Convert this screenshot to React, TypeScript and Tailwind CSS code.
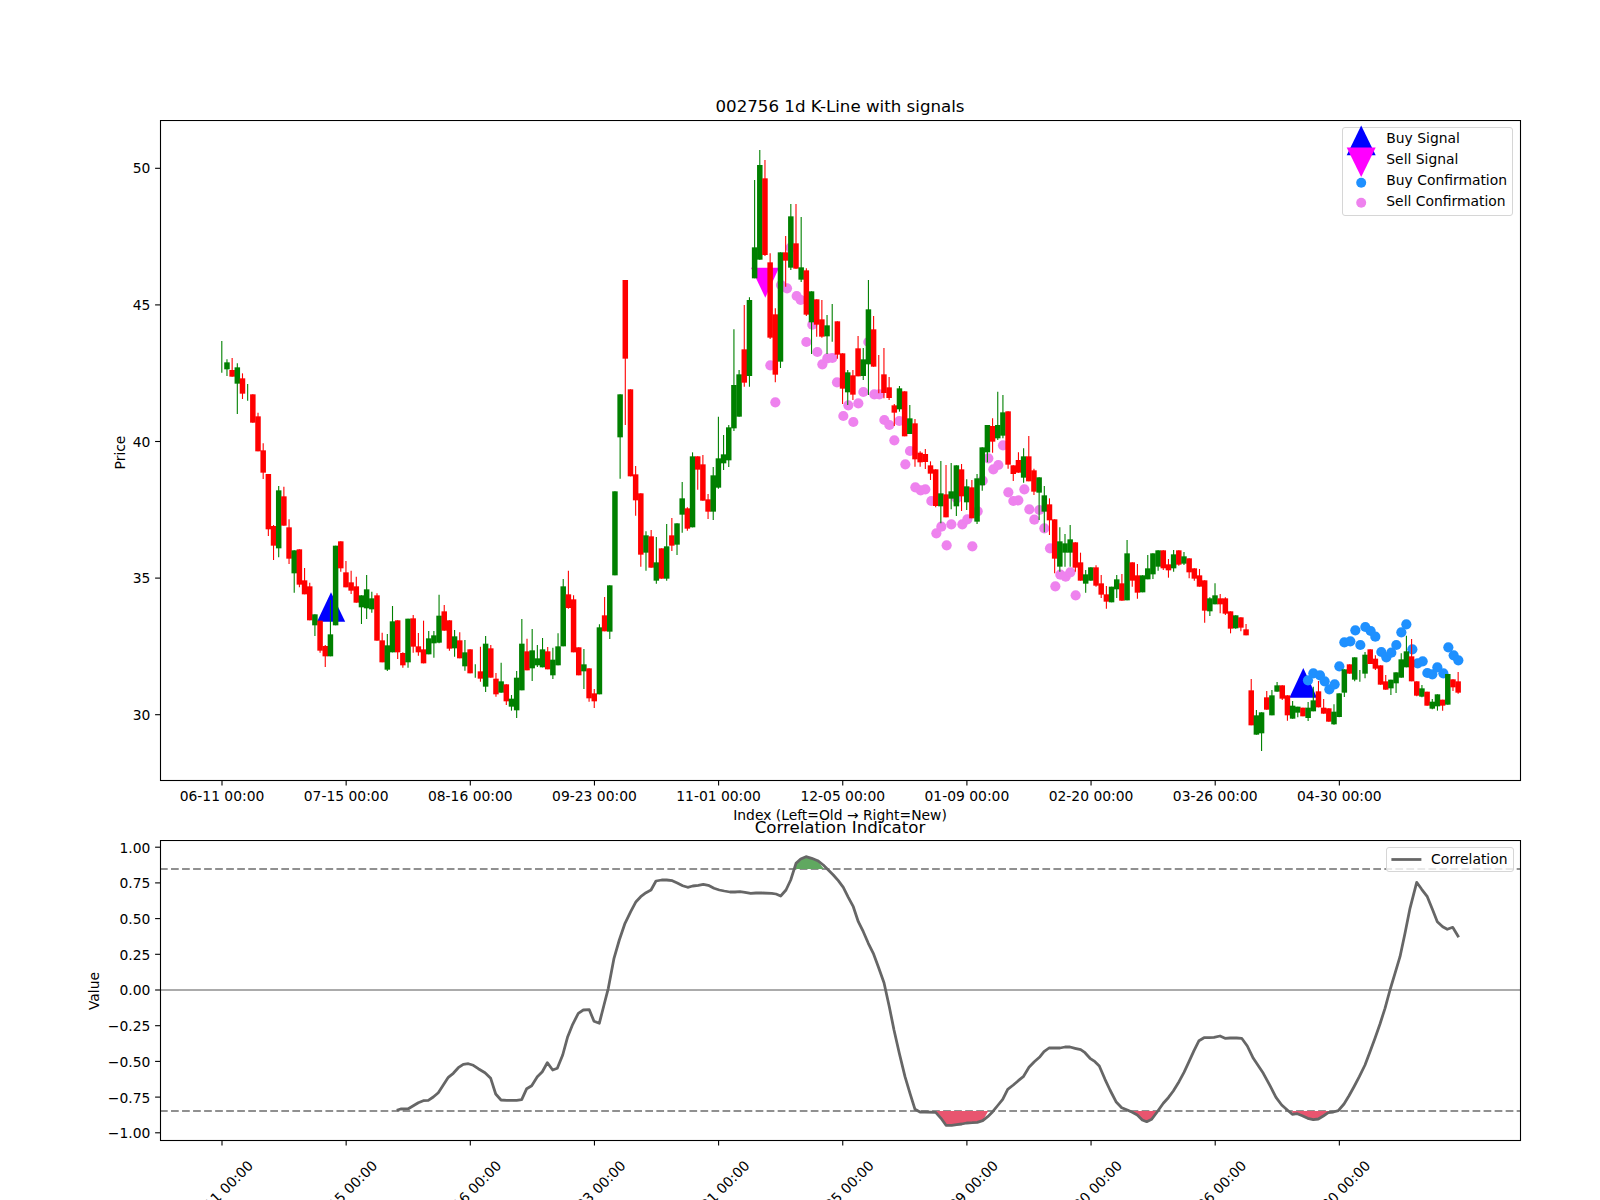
type C = [number, string, number, number, number, number];

// Each table holds candles read with a common vertical origin: [index, colour, wickTop, bodyTop, bodyBottom, wickBottom] in 1/3 px.
const frames: [number, C[]][] = [
  [80, [
    [0,'g',783,0,0,878],[1,'g',838,847,868,888],[2,'r',834,870,890,890],[3,'g',850,862,911,1002],[4,'r',880,895,941,957],
    [5,'g',912,0,0,962],[6,'r',943,943,1028,1028],[7,'r',998,1009,1114,1114],[8,'r',1090,1111,1178,1197],
  ]],
  [480, [
    [9,'r',-18,-18,148,168],[10,'r',135,138,197,240],[11,'g',18,31,205,232],[12,'r',20,49,137,137],[13,'r',118,142,236,252],
    [14,'g',211,211,280,338],[15,'r',208,208,314,322],[16,'r',264,301,343,343],[17,'r',308,319,421,421],[18,'g',403,403,436,468],
    [19,'r',422,422,512,518],[20,'r',495,498,529,561],[21,'g',360,463,529,529],[22,'g',197,197,436,436],[23,'r',184,184,265,275],
    [24,'r',243,277,322,322],[25,'r',272,307,332,342],[26,'r',290,319,368,368],[27,'g',346,346,382,432],[28,'g',285,328,385,417],
    [29,'g',335,355,388,398],[30,'r',340,346,482,482],[31,'r',458,481,547,547],[32,'g',462,496,569,573],[33,'g',378,424,517,517],
    [34,'r',421,421,517,537],[35,'r',517,519,556,563],[36,'g',416,416,547,563],[37,'r',405,415,500,518],[38,'r',459,499,517,527],
    [39,'r',422,508,550,550],[40,'g',453,475,523,523],[41,'g',453,466,490,533],[42,'g',344,407,488,490],[43,'r',375,394,452,452],
    [44,'r',421,421,506,512],[45,'g',450,469,505,530],[46,'r',457,481,535,535],[47,'g',480,517,559,572],[48,'r',508,508,580,580],
    [49,'g',553,0,0,593],[50,'r',500,574,596,605],[51,'g',468,491,620,636],[52,'r',495,505,593,593],[53,'r',579,596,643,650],
    [54,'g',548,604,638,638],[55,'r',613,613,664,675],[56,'g',645,656,680,692],[57,'g',573,593,691,714],[58,'g',417,491,631,631],
    [59,'r',476,514,571,571],[60,'g',447,511,565,603],[61,'g',495,535,556,561],[62,'g',474,508,562,562],[63,'r',501,514,568,568],
    [64,'g',503,539,586,597],[65,'g',460,499,556,556],[66,'g',297,319,499,499],[67,'r',272,343,384,386],[68,'r',346,358,517,517],
    [69,'r',502,502,586,586],[70,'g',507,553,574,627],[71,'r',565,565,655,665],[72,'r',627,640,664,684],[73,'g',433,442,643,643],
    [74,'r',351,406,454,454],[75,'g',316,316,455,477],[76,'g',34,34,286,286],
  ]],
  [130, [
    [77,'g',793,793,922,1046],[78,'r',450,450,686,885],[79,'r',778,778,1039,1039],
    [99,'g',598,765,895,903],[100,'g',720,733,860,860],[101,'r',525,658,758,770],[102,'g',502,510,738,770],[103,'g',150,352,445,445],
    [104,'g',60,105,389,389],[105,'r',90,145,375,378],[106,'r',370,397,623,627],[107,'r',535,553,734,757],[108,'g',367,367,695,714],
    [109,'r',318,367,392,470],[110,'g',222,259,413,420],[111,'r',222,340,416,416],[112,'g',261,412,449,456],[113,'r',415,421,554,558],
    [114,'g',484,484,577,672],[115,'r',508,508,584,620],[116,'r',510,568,620,623],[117,'g',555,586,619,672],[118,'g',522,0,0,635],
    [119,'r',574,574,674,686],[120,'r',670,670,776,822],[121,'g',720,727,787,825],[122,'r',720,736,794,810],[123,'r',618,655,739,739],
    [124,'g',654,688,738,750],[125,'g',450,538,703,795],[126,'r',558,598,710,710],[127,'r',675,0,0,790],[128,'r',654,733,789,805],
    [129,'r',741,772,804,810],[130,'r',822,826,848,888],[131,'g',768,775,838,845],[132,'r',784,784,919,919],[133,'g',825,865,912,912],
    [134,'r',867,880,988,1010],[149,'r',865,888,935,968],[150,'g',785,885,925,930],
  ]],
  [430, [
    [80,'r',108,133,211,257],[81,'r',190,190,374,410],[82,'g',304,316,368,422],[83,'r',300,319,413,413],[84,'g',321,397,452,461],
    [85,'r',355,355,446,446],[86,'g',282,349,446,452],[87,'r',264,316,347,363],[88,'g',280,280,344,375],[89,'g',156,205,254,308],
    [90,'r',232,235,296,302],[91,'g',67,79,292,292],[92,'r',79,79,119,179],[93,'r',75,103,212,212],[94,'r',192,208,245,267],
    [95,'g',111,136,245,270],[96,'g',-40,85,173,176],[97,'g',15,73,100,120],[98,'g',-15,-8,91,111],
    [135,'r',64,68,97,110],[136,'r',57,72,96,117],[137,'r',94,106,131,150],[138,'r',118,118,228,232],[139,'g',93,190,229,280],
    [140,'r',105,193,262,262],[141,'g',99,184,206,238],[142,'g',106,106,229,258],[143,'r',102,118,199,243],[144,'g',148,169,217,240],
    [145,'r',150,172,265,265],[146,'g',132,145,275,282],[147,'g',52,52,166,182],[148,'g',-15,-15,67,97],
  ]],
  [370, [
    [151,'g',75,127,197,205],[152,'r',124,124,284,296],[153,'r',286,286,312,333],[154,'r',247,270,308,308],[155,'g',235,259,323,338],
    [156,'r',198,259,334,334],[157,'r',296,301,365,375],[158,'g',322,322,368,450],[159,'g',348,376,425,487],[160,'r',385,403,451,495],
    [161,'r',448,448,566,610],[162,'g',472,514,590,605],[163,'g',492,520,548,590],[164,'g',465,508,548,590],[165,'r',517,517,593,605],
    [166,'r',548,577,632,632],[167,'g',600,613,641,668],[168,'g',592,592,632,632],[169,'r',586,592,647,650],[170,'r',615,640,674,684],
    [171,'r',648,673,695,716],[172,'g',650,650,697,697],[173,'g',615,628,658,684],[174,'r',612,640,692,692],[175,'g',510,550,691,691],
    [176,'r',577,577,632,650],[177,'r',582,616,668,686],[178,'g',616,616,667,667],[179,'g',555,595,628,628],[180,'g',550,550,613,627],
    [181,'g',541,541,590,602],[182,'r',541,541,595,600],[183,'r',567,583,601,623],[184,'g',540,553,595,605],[185,'r',541,541,584,587],
    [186,'g',546,559,581,585],[187,'r',565,565,607,625],[188,'r',595,595,626,632],[189,'r',597,616,650,650],[190,'r',631,631,722,758],
    [191,'g',682,685,724,738],[192,'g',640,676,703,703],[193,'r',672,685,703,730],[194,'r',682,685,731,735],[195,'r',724,724,776,790],
    [196,'g',736,736,775,776],[197,'r',742,742,773,784],[198,'r',762,778,796,796],[199,'r',927,961,1066,1066],[200,'g',1020,1036,1094,1094],
    [201,'g',1027,1027,1090,1143],[202,'r',963,982,1019,1019],[203,'g',960,976,1036,1036],[204,'g',936,946,965,965],[205,'r',946,946,986,990],
    [206,'r',976,976,1036,1052],[207,'g',993,1007,1046,1046],
  ]],
  [600, [
    [208,'g',320,320,338,352],[209,'r',323,323,349,349],[210,'g',306,323,354,363],[211,'g',260,301,334,334],[212,'r',243,274,322,322],
    [213,'r',297,323,341,341],[214,'r',325,325,365,365],[215,'g',313,335,373,374],[216,'g',280,280,351,352],[217,'g',208,208,278,291],
    [218,'r',193,193,221,221],[219,'g',172,172,239,244],[220,'g',210,0,0,245],[221,'g',156,164,221,235],[222,'r',148,148,192,192],
    [223,'r',166,176,206,210],[224,'r',196,196,254,254],[225,'r',225,244,269,269],[226,'g',239,239,265,285],[227,'g',217,217,250,279],
    [228,'g',160,178,233,233],[229,'g',107,154,202,202],[230,'r',117,169,244,244],[231,'r',244,244,287,289],[232,'g',255,265,290,292],
    [233,'r',275,275,317,317],[234,'g',297,305,326,328],[235,'g',283,283,319,332],[236,'r',299,299,317,332],[237,'g',222,222,314,314],
    [238,'r',238,238,262,273],[239,'r',216,244,278,281],
  ]],
];

const X = (i: number) => 221.8 + 5.173 * i;

const tr = (x0: number, y0: number, pts: number[][]) => pts.map(([x, y]) => [x0 + x / 3, y0 + y / 3]);

// sell-confirmation dots
const pinkDots = [
  ...tr(600, 130, [
    [511,706],[526,817],[543,465],[561,475],[590,498],[572,353],[602,510],[619,636],[637,584],[652,666],[667,703],[682,685],[697,684],
    [711,757],[730,858],[745,826],[760,876],[775,820],[790,786],[805,636],[823,793],[838,793],[853,870],[868,885],[898,873],
  ]),
  ...tr(600, 430, [
    [883,31],[916,103],[930,63],[946,172],[962,181],[976,178],[994,213],[1009,310],[1024,290],[1040,346],[1054,283],[1070,205],
    [1087,283],[1102,268],[1117,349],[1133,244],[1148,152],[1165,85],[1180,118],[1195,105],
  ]),
  ...tr(1000, 370, [
    [9,226],[25,367],[40,393],[55,391],[73,358],[88,418],[103,449],[118,420],[133,475],[150,535],[166,649],[181,614],[197,620],[211,607],[227,676],
  ]),
];

const blueDots = tr(1240, 600, [
  [204,241],[220,220],[240,226],[254,244],[268,268],[284,253],[298,199],[313,127],[331,124],[346,91],[361,135],[376,81],[392,93],[406,110],
  [424,156],[439,172],[454,158],[469,135],[484,97],[499,73],[517,148],[533,190],[548,184],[562,219],[577,223],[592,202],[610,220],[625,142],[641,166],[655,181],
]);

const tickLabels = ['06-11 00:00','07-15 00:00','08-16 00:00','09-23 00:00','11-01 00:00','12-05 00:00','01-09 00:00','02-20 00:00','03-26 00:00','04-30 00:00'];
const tickX = (k: number) => 222 + 124.15 * k;
const priceY = (p: number) => 714.7 - (p - 30) * 27.32;
const corrY = (v: number) => 990 - 142.8 * v;

const line = [
  ...tr(60, 800, [[1010,931],[1022,927],[1045,926],[1060,917],[1075,908],[1090,902],[1105,901],[1120,891],[1135,878],[1150,855],[1165,832],[1180,820],[1195,803],[1210,793],[1225,791],[1240,796],[1255,806],[1275,818],[1292,835],[1307,882],[1323,900],[1340,901],[1370,901],[1385,899],[1400,866],[1415,857],[1432,830],[1447,815],[1462,788],[1478,810],[1492,805]]),
  ...tr(540, 800, [[68,765],[83,710],[98,673],[115,640],[130,630],[148,629],[162,664],[178,670],[192,615],[205,565],[222,475],[238,420],[255,370],[272,335],[288,305],[302,290],[318,278],[333,270],[348,243],[365,240],[380,240],[397,242],[412,249],[428,257],[443,262],[458,258],[475,256],[490,253],[505,256],[522,265],[538,270],[553,273],[570,276],[585,276],[600,275],[615,277],[632,280],[648,279],[665,279],[695,280],[708,282],[722,288],[738,270],[752,240],[768,190],[782,177],[798,170],[815,175],[833,182],[850,195],[865,210],[880,225],[895,242],[910,262],[925,292],[940,320],[955,365],[970,395],[985,430],[1000,460],[1015,500],[1032,548],[1048,620],[1062,690],[1078,760],[1095,830],[1110,880],[1125,928],[1140,936],[1155,936],[1187,937],[1203,955],[1218,976],[1235,976],[1250,974],[1265,972],[1280,969],[1297,968],[1312,967],[1328,962],[1343,950],[1358,935],[1372,918],[1388,898],[1403,868],[1420,855],[1435,842],[1450,830],[1467,802],[1483,785]]),
  ...tr(1040, 800, [[0,770],[12,755],[27,744],[42,744],[60,744],[75,741],[90,741],[105,745],[122,749],[135,758],[150,775],[165,785],[178,798],[195,838],[210,870],[228,905],[245,923],[262,930],[277,937],[292,945],[307,960],[320,965],[335,958],[352,935],[370,910],[385,893],[400,873],[417,845],[432,817],[447,785],[462,752],[477,722],[492,713],[507,713],[522,712],[540,708],[555,715],[570,714],[590,714],[605,715],[622,738],[640,775],[652,793],[670,820],[690,857],[708,892],[725,915],[742,930],[757,943],[772,941],[787,947],[803,955],[820,959],[835,957],[850,948],[865,938],[880,936],[895,932],[912,912],[927,887],[942,860],[958,830],[975,795],[990,755],[1005,715],[1020,672],[1035,625],[1050,570],[1065,520],[1080,470],[1095,400],[1110,325],[1130,247],[1145,268],[1162,290],[1178,330],[1192,365],[1208,380],[1222,388],[1238,382],[1256,412]]),
];

const toPts = (pts: number[][]) => pts.map(([x, y]) => `${x.toFixed(1)},${y.toFixed(1)}`).join(' ');

const fills: [string, number[][]][] = [
  ['#60a860', tr(540, 800, [[765,207],[768,190],[782,177],[798,170],[815,175],[833,182],[852,207]])],
  ['#e8556f', tr(540, 800, [[1187,933],[1203,955],[1218,976],[1235,976],[1250,974],[1265,972],[1280,969],[1297,968],[1312,967],[1328,962],[1345,933]])],
  ['#e8556f', tr(1040, 800, [[277,933],[292,945],[307,960],[320,965],[335,958],[352,933]])],
  ['#e8556f', tr(1040, 800, [[757,933],[757,943],[772,941],[787,947],[803,955],[820,959],[835,957],[850,948],[865,938],[880,933]])],
];

function Candles() {
  const all = frames
    .flatMap(([y0, list]) => list.map((c) => ({ y0, c })))
    .sort((a, b) => a.c[0] - b.c[0]);
  return (
    <g>
      {all.map(({ y0, c }) => {
        const [i, col, wt, bt, bb, wb] = c;
        const x = X(i);
        const color = col === 'g' ? '#008000' : '#ff0000';
        return (
          <g key={i}>
            <line x1={x} x2={x} y1={y0 + wt / 3} y2={y0 + wb / 3} stroke={color} strokeWidth={1.1} />
            {bb > bt && <rect x={x - 2.75} y={y0 + bt / 3} width={5.5} height={(bb - bt) / 3} fill={color} />}
          </g>
        );
      })}
    </g>
  );
}

function LegendRow({ label, swatch }: { label: string; swatch: React.ReactNode }) {
  return (
    <div className="flex h-[20.9px] items-center">
      <svg width={43} height={20.9} viewBox="-18.2 -10.45 43 20.9" className="shrink-0 overflow-visible">
        {swatch}
      </svg>
      <span className="leading-[16px]">{label}</span>
    </div>
  );
}

export default function App() {
  return (
    <div className="flex h-[1200px] w-[1600px] flex-col overflow-hidden bg-white text-[13.89px] text-black font-['DejaVu_Sans',sans-serif]">
      <div className="ml-[160px] h-[120px] w-[1360px] pt-[97px] text-center text-[16.67px] leading-[20px]">
        002756 1d K-Line with signals
      </div>

      <div className="relative h-[684px] w-[1600px] shrink-0">
        <svg width={1600} height={684} viewBox="0 120 1600 684" className="block">
          <polygon points="331,592.3 317,621.7 345.2,621.7" fill="#0000ff" />
          <polygon points="1303.3,668 1289.4,697.7 1317,697.7" fill="#0000ff" />
          <polygon points="765.3,297.7 751,267.7 779,267.7" fill="#ff00ff" />
          {pinkDots.map(([x, y], k) => (
            <circle key={k} cx={x} cy={y} r={5.1} fill="#ee82ee" />
          ))}
          {blueDots.map(([x, y], k) => (
            <circle key={k} cx={x} cy={y} r={5.1} fill="#1e90ff" />
          ))}
          <Candles />
          <rect x={160.5} y={120.5} width={1360} height={660} fill="none" stroke="#000" strokeWidth={1.1} />
          {[50, 45, 40, 35, 30].map((p) => (
            <g key={p}>
              <line x1={155.1} x2={160} y1={priceY(p)} y2={priceY(p)} stroke="#000" strokeWidth={1.1} />
              <text x={150.3} y={priceY(p) + 5} textAnchor="end">{p}</text>
            </g>
          ))}
          {tickLabels.map((t, k) => (
            <g key={t}>
              <line x1={tickX(k)} x2={tickX(k)} y1={781} y2={785.4} stroke="#000" strokeWidth={1.1} />
              <text x={tickX(k)} y={801} textAnchor="middle">{t}</text>
            </g>
          ))}
          <text transform="rotate(-90 125 452.5)" x={125} y={452.5} textAnchor="middle">Price</text>
        </svg>

        <div className="absolute left-[1342.3px] top-[7.3px] h-[88.4px] w-[171px] rounded-[3px] border border-[#d6d6d6] bg-white/80">
          <div className="-mt-[0.5px]">
            <LegendRow label="Buy Signal" swatch={<polygon points="0,-13 -14.5,16.7 14.5,16.7" fill="#0000ff" />} />
            <LegendRow label="Sell Signal" swatch={<polygon points="0,17.5 -14.5,-12 14.5,-12" fill="#ff00ff" />} />
            <LegendRow label="Buy Confirmation" swatch={<circle cx={0} cy={2.3} r={5} fill="#1e90ff" />} />
            <LegendRow label="Sell Confirmation" swatch={<circle cx={0} cy={2.3} r={5} fill="#ee82ee" />} />
          </div>
        </div>
      </div>

      <div className="ml-[160px] h-[36px] w-[1360px] shrink-0 pt-[3px] text-center">
        <div className="leading-[16px]">Index (Left=Old → Right=New)</div>
        <div className="-mt-[5.5px] text-[16.67px] leading-[20px]">Correlation Indicator</div>
      </div>

      <div className="relative h-[360px] w-[1600px] shrink-0">
        <svg width={1600} height={360} viewBox="0 840 1600 360" className="block">
          <line x1={160} x2={1520} y1={869} y2={869} stroke="#909090" strokeWidth={2} strokeDasharray="7.7 3.33" />
          <line x1={160} x2={1520} y1={1111} y2={1111} stroke="#909090" strokeWidth={2} strokeDasharray="7.7 3.33" />
          <line x1={160} x2={1520} y1={990} y2={990} stroke="#ababab" strokeWidth={2} />
          {fills.map(([color, pts], k) => (
            <polygon key={k} points={toPts(pts)} fill={color} />
          ))}
          <polyline points={toPts(line)} fill="none" stroke="#666666" strokeWidth={2.78} strokeLinejoin="round" />
          <rect x={160.5} y={840.5} width={1360} height={300} fill="none" stroke="#000" strokeWidth={1.1} />
          {[1, 0.75, 0.5, 0.25, 0, -0.25, -0.5, -0.75, -1].map((v) => (
            <g key={v}>
              <line x1={155.1} x2={160} y1={corrY(v)} y2={corrY(v)} stroke="#000" strokeWidth={1.1} />
              <text x={150.3} y={corrY(v) + 5.4} textAnchor="end">
                {(v < 0 ? '\u2212' : '') + Math.abs(v).toFixed(2)}
              </text>
            </g>
          ))}
          {tickLabels.map((t, k) => (
            <g key={t}>
              <line x1={tickX(k)} x2={tickX(k)} y1={1141} y2={1145.4} stroke="#000" strokeWidth={1.1} />
              <text transform={`rotate(-45 ${tickX(k) - 1.5} 1193)`} x={tickX(k) - 1.5} y={1198} textAnchor="middle">{t}</text>
            </g>
          ))}
          <text transform="rotate(-90 99 991)" x={99} y={991} textAnchor="middle">Value</text>
        </svg>

        <div className="absolute left-[1386.3px] top-[7.3px] flex h-[25px] w-[127.4px] items-center rounded-[3px] border border-[#d6d6d6] bg-white/80 pb-[1px]">
          <svg width={43.7} height={23} viewBox="0 -11.5 43.7 23" className="shrink-0">
            <line x1={4.4} x2={34.4} y1={0} y2={0} stroke="#666666" strokeWidth={2.78} />
          </svg>
          <span className="leading-[16px]">Correlation</span>
        </div>
      </div>
    </div>
  );
}
